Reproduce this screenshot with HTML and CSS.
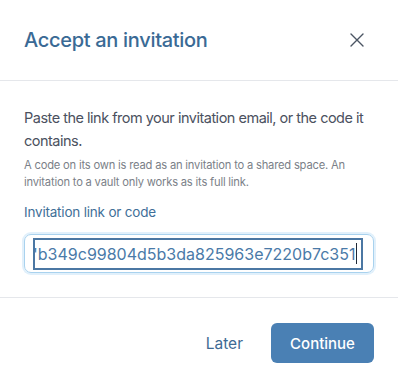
FILE: index.html
```html
<!DOCTYPE html>
<html lang="en">
<head>
    <meta charset="UTF-8">
    <meta name="viewport" content="width=device-width, initial-scale=1.0">
    <title>Accept an invitation</title>
    <link rel="stylesheet" href="styles.css">
</head>
<body>
    <div class="dialog">
        <header class="dialog-header">
            <h2>Accept an invitation</h2>
            <button class="close" aria-label="Close">
                <svg width="14" height="14" viewBox="0 0 14 14">
                    <path d="M1 1L13 13M13 1L1 13" stroke="#4b5563" stroke-width="1.4" stroke-linecap="round"/>
                </svg>
            </button>
        </header>
        <div class="dialog-body">
            <p class="lead">Paste the link from your invitation email, or the code it contains.</p>
            <p class="hint">A code on its own is read as an invitation to a shared space. An invitation to a vault only works as its full link.</p>
            <label class="field-label" for="code">Invitation link or code</label>
            <div class="field">
                <div class="field-input" id="code"><span class="scrolled">'b349c99804d5b3da825963e7220b7c351</span><span class="caret"></span></div>
            </div>
        </div>
        <footer class="dialog-footer">
            <button class="btn btn-link">Later</button>
            <button class="btn btn-primary">Continue</button>
        </footer>
    </div>
</body>
</html>
```

FILE: styles.css
```css
body {
    margin: 0;
    padding: 0;
    background: #ffffff;
    font-family: Inter, "Noto Sans", sans-serif;
}

.dialog {
    width: 398px;
    height: 387px;
    background: #ffffff;
}

.dialog-header {
    display: flex;
    align-items: center;
    justify-content: space-between;
    height: 81px;
    padding: 0 34px 0 24px;
    border-bottom: 1px solid #e5e7eb;
    box-sizing: border-box;
}

.dialog-header h2 {
    margin: 0;
    font-size: 20px;
    font-weight: 500;
    letter-spacing: -0.3px;
    color: #3a6a95;
}

.close {
    background: none;
    border: none;
    padding: 0;
    width: 14px;
    height: 14px;
    cursor: pointer;
    display: flex;
}

.dialog-body {
    padding: 25px 24px 0;
    height: 217px;
    box-sizing: border-box;
    border-bottom: 1px solid #e5e7eb;
}

.lead {
    margin: 0;
    font-size: 14.5px;
    line-height: 23px;
    letter-spacing: -0.5px;
    color: #4b5160;
}

.hint {
    margin: 5px 0 0;
    font-size: 11.2px;
    line-height: 16.5px;
    letter-spacing: -0.2px;
    color: #7b7f88;
}

.field-label {
    display: block;
    margin-top: 14px;
    line-height: 16px;
    font-size: 13.5px;
    letter-spacing: -0.2px;
    color: #3f6f98;
}

.field {
    margin-top: 14px;
    height: 39px;
    border: 1px solid #a9d2ee;
    border-radius: 7px;
    box-shadow: 0 0 0 2px #e1f0fb;
    display: flex;
    align-items: center;
    padding: 0 10px 0 8px;
    box-sizing: border-box;
}

.field-input {
    flex: 1;
    height: 32px;
    border: 2px solid #4b77a3;
    box-sizing: border-box;
    display: flex;
    align-items: center;
    font-size: 16px;
    color: #4a7aa8;
    white-space: nowrap;
    overflow: hidden;
    letter-spacing: 0;
}

.scrolled {
    margin-left: -2px;
}

.caret {
    display: inline-block;
    width: 1px;
    height: 21px;
    margin-left: 1px;
    background: #1f2937;
}

.dialog-footer {
    display: flex;
    justify-content: flex-end;
    align-items: center;
    gap: 10px;
    padding: 25px 24px 0;
}

.btn {
    font-family: Inter, "Noto Sans", sans-serif;
    font-size: 15px;
    border: none;
    cursor: pointer;
    border-radius: 6px;
    height: 40px;
}

.btn-link {
    background: none;
    color: #3f6a93;
    padding: 0 18px;
    font-size: 15.5px;
}

.btn-primary {
    background: #4a80b4;
    color: #ffffff;
    font-weight: 500;
    padding: 0 17px;
    min-width: 103px;
}
```
